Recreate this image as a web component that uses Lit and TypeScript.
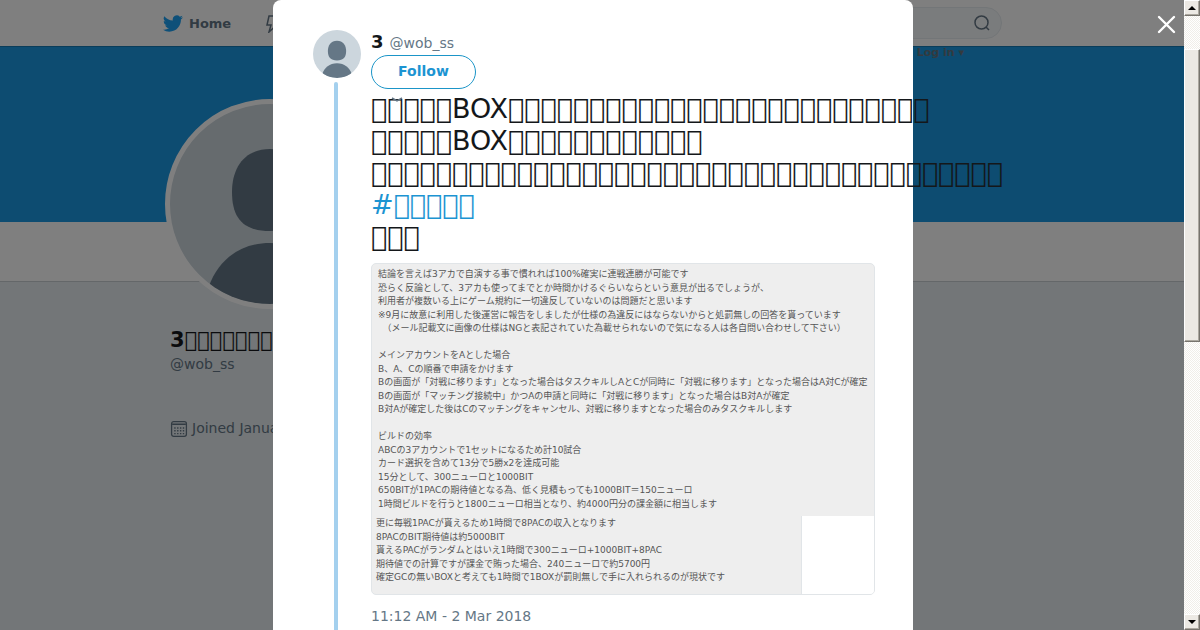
import { LitElement, html, css, svg } from "lit";
import { customElement } from "lit/decorators.js";

// U+E900 is a private-use character that no installed font covers, so it shows as an empty box.
const box = (n: number) => "\uE900".repeat(n);

const guideLines = [
  "結論を言えば3アカで自演する事で慣れれば100%確実に連戦連勝が可能です",
  "恐らく反論として、3アカも使ってまでとか時間かけるぐらいならという意見が出るでしょうが、",
  "利用者が複数いる上にゲーム規約に一切違反していないのは問題だと思います",
  "※9月に故意に利用した後運営に報告をしましたが仕様の為違反にはならないからと処罰無しの回答を貰っています",
  "　（メール記載文に画像の仕様はNGと表記されていた為載せられないので気になる人は各自問い合わせして下さい）",
  "",
  "メインアカウントをAとした場合",
  "B、A、Cの順番で申請をかけます",
  "Bの画面が「対戦に移ります」となった場合はタスクキルしAとCが同時に「対戦に移ります」となった場合はA対Cが確定",
  "Bの画面が「マッチング接続中」かつAの申請と同時に「対戦に移ります」となった場合はB対Aが確定",
  "B対Aが確定した後はCのマッチングをキャンセル、対戦に移りますとなった場合のみタスクキルします",
  "",
  "ビルドの効率",
  "ABCの3アカウントで1セットになるため計10試合",
  "カード選択を含めて13分で5勝x2を達成可能",
  "15分として、300ニューロと1000BIT",
  "650BITが1PACの期待値となる為、低く見積もっても1000BIT＝150ニューロ",
  "1時間ビルドを行うと1800ニューロ相当となり、約4000円分の課金額に相当します",
];

const summaryLines = [
  "更に毎戦1PACが貰えるため1時間で8PACの収入となります",
  "8PACのBIT期待値は約5000BIT",
  "貰えるPACがランダムとはいえ1時間で300ニューロ+1000BIT+8PAC",
  "期待値での計算ですが課金で賄った場合、240ニューロで約5700円",
  "確定GCの無いBOXと考えても1時間で1BOXが罰則無しで手に入れられるのが現状です",
];

@customElement("user-avatar")
export class UserAvatar extends LitElement {
  static styles = css`
    :host { display: block; border-radius: 50%; overflow: hidden; background: #ccd6dd; }
    svg { display: block; width: 100%; height: 100%; }
  `;
  render() {
    return html`<svg viewBox="0 0 200 200" aria-hidden="true">
      <path fill="#657786" d="M100 45c25 0 38 18 38 43 0 26-11 39-38 39S62 114 62 88c0-25 13-43 38-43z" />
      <path fill="#657786" d="M100 139c31 0 52 18 61 43-18 12-38 18-61 18s-43-6-61-18c9-25 30-43 61-43z" />
    </svg>`;
  }
}

@customElement("profile-page")
export class ProfilePage extends LitElement {
  static styles = css`
    :host { display: block; height: 100%; background: #e6ecf0; color: #657786; }
    a { color: inherit; text-decoration: none; }
    .bar { height: 46px; box-sizing: border-box; background: #fff; }
    .wrap { display: flex; align-items: center; justify-content: space-between; height: 100%; margin: 0 182px 0 163px; }
    .nav { display: flex; align-items: center; gap: 34px; }
    .home { display: flex; align-items: center; gap: 6px; font-weight: bold; font-size: 13px; }
    .bird { width: 20px; height: 17px; fill: #1da1f2; }
    .bolt { display: block; width: 16px; height: 20px; fill: none; stroke: #657786; stroke-width: 2; }
    .search { display: flex; align-items: center; width: 220px; height: 32px; box-sizing: border-box; border: 1px solid #e6ecf0; border-radius: 16px; background: #f5f8fa; padding-right: 11px; }
    .search input { flex: 1; min-width: 0; border: 0; background: none; outline: none; font: inherit; }
    .lens { width: 16px; height: 16px; fill: none; stroke: #657786; stroke-width: 1.5; }
    .cover { height: 176px; box-sizing: border-box; background: #1b98e2; border-top: 1px solid #157ab5; position: relative; }
    .login { position: absolute; top: 0; right: 220px; font-size: 11px; line-height: 12px; font-weight: bold; color: #66757f; }
    .tabs { height: 60px; box-sizing: border-box; background: #fff; border-bottom: 1px solid #c8ced2; }
    .profile { margin-left: 165px; }
    .photo { position: relative; width: 200px; height: 200px; margin-top: -183px; border: 5px solid #fff; }
    .about { padding: 19px 5px; }
    h1 { margin: 0; font-size: 21px; line-height: 25px; color: #14171a; white-space: nowrap; }
    .light { font-weight: normal; }
    p { margin: 0; }
    .handle { font-size: 14px; line-height: 22px; }
    .joined { display: flex; align-items: center; gap: 4px; margin-top: 42px; font-size: 14px; line-height: 22px; }
    .cal { width: 18px; height: 18px; margin-top: 2px; }
  `;
  render() {
    return html`
      <header class="bar"><div class="wrap">
        <nav class="nav">
          <a class="home" href="#home">
            <svg class="bird" viewBox="0 2 24 20" aria-hidden="true"><path d="M23.95 4.57a10 10 0 0 1-2.82.77 4.96 4.96 0 0 0 2.16-2.72c-.95.55-2 .95-3.13 1.18a4.92 4.92 0 0 0-8.38 4.48C7.69 8.1 4.07 6.13 1.64 3.16a4.92 4.92 0 0 0 1.52 6.57 4.9 4.9 0 0 1-2.23-.61v.06a4.92 4.92 0 0 0 3.95 4.83 5 5 0 0 1-2.21.08 4.94 4.94 0 0 0 4.6 3.42A9.87 9.87 0 0 1 0 19.54a14 14 0 0 0 7.55 2.21c9.05 0 14-7.5 14-13.98 0-.21 0-.42-.02-.63a9.94 9.94 0 0 0 2.46-2.55z" /></svg>
            <span>Home</span>
          </a>
          <a href="#moments" aria-label="Moments"><svg class="bolt" viewBox="0 0 16 20"><path stroke-width="1.5" d="M4 3h9l-3 6h5L4 19l2-7H2z" /></svg></a>
        </nav>
        <div class="search">
          <input type="search" aria-label="Search" />
          <svg class="lens" viewBox="0 0 16 16" aria-hidden="true"><circle cx="7.5" cy="7.5" r="6.5" /><path d="M12 12l3 3" /></svg>
        </div>
      </div></header>
      <div class="cover"><a class="login" href="#login">Log in ▾</a></div>
      <div class="tabs"></div>
      <div class="profile">
        <user-avatar class="photo"></user-avatar>
        <div class="about">
          <h1>3<span class="light">${box(8)}</span></h1>
          <p class="handle">@wob_ss</p>
          <p class="joined">
            <svg class="cal" viewBox="0 0 17 17" fill="none" stroke="#657786" aria-hidden="true">
              <rect x="1.5" y="1.5" width="14" height="14" rx="2" stroke-width="1.2" />
              <path d="M2 4h13" stroke-width="1.4" />
              <path d="M4 7.5h10M4 10.2h10M4 12.9h10" stroke-width="1.3" stroke-dasharray="1.3 1.4" />
            </svg>
            <span>Joined January 2018</span>
          </p>
        </div>
      </div>
    `;
  }
}

@customElement("tweet-dialog")
export class TweetDialog extends LitElement {
  static styles = css`
    :host { display: block; box-sizing: border-box; width: 640px; max-width: 100%; min-height: 100%; padding: 30px 38px 0 40px; border-radius: 8px 8px 0 0; background: #fff; color: #14171a; }
    a { color: inherit; text-decoration: none; }
    .tweet { display: grid; grid-template-columns: 48px minmax(0, 1fr); column-gap: 10px; min-height: calc(100vh - 30px); }
    .rail { display: flex; flex-direction: column; align-items: center; gap: 4px; }
    .face { width: 48px; height: 48px; }
    .thread { flex: 1; width: 4px; margin-right: 2px; border-radius: 2px 2px 0 0; background: #a4d0ee; }
    .author { display: flex; align-items: baseline; gap: 6px; height: 25px; line-height: 24px; font-size: 14px; color: #657786; }
    .name { font-size: 18px; color: #14171a; }
    .actions { position: relative; width: max-content; }
    .follow { display: block; box-sizing: border-box; width: 105px; height: 34px; padding: 0 0 2px; border: 1px solid #1b95c8; border-radius: 17px; background: #fff; color: #1c94d2; font: bold 14px "DejaVu Sans", sans-serif; }
    .more { position: absolute; top: 42px; left: 20px; width: 12px; height: 6px; padding: 0; border: 0; background: none; }
    .more svg { display: block; fill: none; stroke: #657786; stroke-width: 1.5; }
    .text { margin: 4px 0 0; font-size: 27px; line-height: 32px; white-space: pre; }
    .tag { color: #1c94d2; }
    .card { margin: 10px 0 0; box-sizing: border-box; border: 1px solid #e1e5e8; border-radius: 5px; overflow: hidden; background: #eee; color: #555; font: 9px/1.5 "DejaVu Sans", "Noto Sans CJK JP", sans-serif; }
    .line { min-height: 1.5em; white-space: pre; }
    .guide { padding: 4px 6px 5px; }
    .lower { display: grid; grid-template-columns: minmax(0, 1fr) 72px; }
    .summary { padding: 1px 4px 9px; border-right: 1px solid #e1e5e8; }
    .blank { background: #fff; }
    .time { display: block; margin-top: 11px; font-size: 14px; line-height: 20px; color: #657786; }
  `;
  render() {
    const row = (t: string) => html`<div class="line">${t}</div>`;
    return html`<article class="tweet">
      <div class="rail"><user-avatar class="face"></user-avatar><div class="thread"></div></div>
      <div>
        <a class="author" href="#wob_ss"><strong class="name">3</strong><span>@wob_ss</span></a>
        <div class="actions">
          <button class="follow" type="button">Follow</button>
          <button class="more" type="button" aria-label="More"><svg width="12" height="6" viewBox="0 0 12 6"><path d="M1 1l5 3 5-3" /></svg></button>
        </div>
        <p class="text">${box(5)}BOX${box(26)}
${box(5)}BOX${box(12)}
${box(39)}
<a class="tag" href="#tag">#${box(5)}</a>
${box(3)}</p>
        <div class="card" lang="ja">
          <div class="guide">${guideLines.map(row)}</div>
          <div class="lower"><div class="summary">${summaryLines.map(row)}</div><div class="blank"></div></div>
        </div>
        <time class="time">11:12 AM - 2 Mar 2018</time>
      </div>
    </article>`;
  }
}

@customElement("classic-scrollbar")
export class ClassicScrollbar extends LitElement {
  static styles = css`
    :host { display: grid; grid-template-rows: 16px 33fr 293fr 272fr 16px; background: repeating-conic-gradient(#fff 0 25%, #f0eee9 0 50%) 0 0 / 2px 2px; }
    .key, .thumb { box-sizing: border-box; padding: 0; border: 1px solid; border-color: #fff #77746e #77746e #fff; background: #ece9e4; box-shadow: inset -1px -1px #aca8a0; }
    .key { display: grid; place-items: center; }
  `;
  render() {
    const key = (label: string, d: string) => html`<button class="key" type="button" aria-label=${label}>
      <svg width="8" height="4" viewBox="0 0 8 4">${svg`<path d=${d} />`}</svg></button>`;
    return html`${key("Scroll up", "M4 0l4 4H0z")}<div></div><div class="thumb"></div><div></div>${key("Scroll down", "M0 0h8L4 4z")}`;
  }
}

@customElement("app-root")
export class AppRoot extends LitElement {
  static styles = css`
    :host { display: grid; grid-template-columns: minmax(0, 1fr) 16px; height: 100vh; overflow: hidden; font-family: "DejaVu Sans", sans-serif; }
    .view { position: relative; height: 100vh; overflow: hidden; }
    .overlay { position: absolute; inset: 0; display: flex; justify-content: center; padding-left: 2px; background: rgba(0, 0, 0, 0.5); }
    .dialog { flex: none; }
    .close { position: absolute; top: 15px; right: 8px; width: 20px; height: 20px; padding: 0; border: 0; background: none; }
    .close svg { display: block; fill: none; stroke: #fff; stroke-width: 2.4; stroke-linecap: round; }
  `;
  render() {
    return html`
      <div class="view">
        <profile-page></profile-page>
        <div class="overlay">
          <tweet-dialog class="dialog" role="dialog" aria-label="Tweet"></tweet-dialog>
          <button class="close" type="button" aria-label="Close"><svg width="20" height="20" viewBox="0 0 20 20"><path d="M3 2l15 15M18 2L3 17" /></svg></button>
        </div>
      </div>
      <classic-scrollbar></classic-scrollbar>
    `;
  }
}
